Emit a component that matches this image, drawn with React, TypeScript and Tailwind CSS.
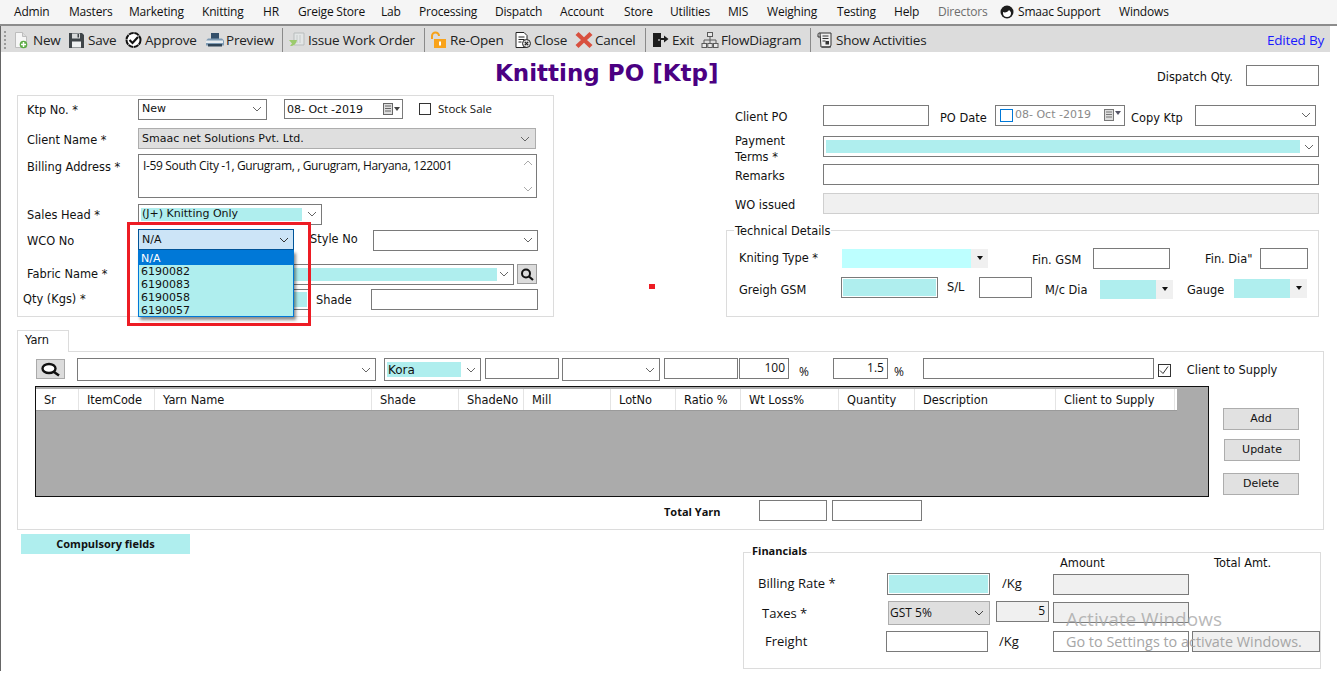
import React from "react";

const F = "font-['DejaVu_Sans',sans-serif]";
const O = "font-['Open_Sans',sans-serif]";

const Chev = ({ c = "#666" }: { c?: string }) => (
  <svg width="10" height="6" viewBox="0 0 10 6" className="shrink-0">
    <path d="M1 1l4 4 4-4" fill="none" stroke={c} strokeWidth="1" />
  </svg>
);

const Tri = () => (
  <svg width="6" height="4" viewBox="0 0 6 4"><path d="M0 0h6L3 4z" fill="#111" /></svg>
);

function Label({ w, children, ml = "", cls = "" }: { w?: string; children: React.ReactNode; ml?: string; cls?: string }) {
  return (
    <div className={`shrink-0 pt-[2px] text-[11.4px] leading-[14px] text-[#111] whitespace-nowrap ${F} ${w ?? ""} ${ml} ${cls}`}>{children}</div>
  );
}

function Sel({ cls, text, fill, fillW = "", sel = false, textCls = "pt-[1px]" }: { cls: string; text?: string; fill?: boolean; fillW?: string; sel?: boolean; textCls?: string }) {
  return (
    <div className={`shrink-0 flex items-center border border-[#7a7a7a] bg-white pr-[4px] text-[11px] text-[#111] ${F} ${cls}`}>
      {fill ? (
        <div className={`h-[calc(100%-6px)] bg-[#afeeee] ml-[2px] flex items-center pl-[1px] ${fillW}`}>{text}</div>
      ) : (
        <div className={`flex-1 pl-[3px] ${textCls}`}>{text}</div>
      )}
      <div className="flex-1" />
      <Chev c={sel ? "#333" : "#666"} />
    </div>
  );
}

function Inp({ cls, children }: { cls: string; children?: React.ReactNode }) {
  return (
    <div className={`shrink-0 border border-[#7a7a7a] bg-white text-[12px] text-[#111] text-right pr-[3px] leading-[18px] ${O} ${cls}`}>{children}</div>
  );
}

function Arrowed({ cls, fill }: { cls: string; fill: string }) {
  return (
    <div className={`shrink-0 flex bg-[#f0f0f0] ${cls}`}>
      <div className={`${fill} h-full`} />
      <div className="flex-1 flex items-center justify-center"><Tri /></div>
    </div>
  );
}

const I = ({ children }: { children: React.ReactNode }) => (
  <svg width="18" height="18" viewBox="0 0 18 18" className="shrink-0">{children}</svg>
);

const Icons: Record<string, React.ReactNode> = {
  New: (
    <I>
      <path d="M2.5 1.5h7l4 4v11h-11z" fill="#f6f6f6" stroke="#bdbdbd" />
      <path d="M9.5 1.5v4h4" fill="#ddd" stroke="#bdbdbd" />
      <circle cx="10.5" cy="13.5" r="3.8" fill="#5cab45" />
      <path d="M10.5 11v5M8 13.5h5" stroke="#fff" strokeWidth="1.5" />
    </I>
  ),
  Save: (
    <I>
      <path d="M1 2h13l2 2v13H1z" fill="#3f4549" />
      <rect x="4" y="2.5" width="8" height="5" fill="#d8dadb" />
      <rect x="9.5" y="3" width="1.5" height="3.5" fill="#3f4549" />
      <rect x="4" y="10.5" width="9" height="6" fill="#eef0f1" />
    </I>
  ),
  Approve: (
    <I>
      <circle cx="8.5" cy="9" r="7" fill="#fff" stroke="#111" strokeWidth="2" strokeDasharray="5 .6" />
      <path d="M4.5 9l3 3 5.5-6" fill="none" stroke="#111" strokeWidth="2.2" />
    </I>
  ),
  Preview: (
    <I>
      <rect x="5" y="2" width="8" height="6" fill="#34506a" />
      <path d="M0 9.5l2-2h14l2 2v5H0z" fill="#7d9ab3" />
      <rect x="0" y="9.5" width="17" height="2.5" fill="#e8edf1" />
      <rect x="2" y="13" width="14" height="2.5" fill="#2f4558" />
    </I>
  ),
  Issue: (
    <I>
      <path d="M6 2h10v12H6z" fill="#e3e6e6" stroke="#b9bdbd" />
      <path d="M9 4v8M12 4v8" stroke="#c6caca" />
      <path d="M1 9h8c-1 4-3 6-7 6l2-2.5z" fill="#9ccb6d" />
    </I>
  ),
  Open: (
    <I>
      <path d="M2 8V5a3.5 3.5 0 0 1 7 0" fill="none" stroke="#f6a21a" strokeWidth="2" />
      <rect x="4" y="8" width="12" height="9" fill="#f9a31b" />
      <rect x="9" y="10.5" width="2" height="4" fill="#fff" />
    </I>
  ),
  Close: (
    <I>
      <path d="M2 1.5h8l3 3v12H2z" fill="#fff" stroke="#222" />
      <path d="M4.5 6h6M4.5 8.5h6M4.5 11h3" stroke="#222" />
      <circle cx="12.5" cy="12.5" r="4" fill="#ddd" stroke="#222" />
      <path d="M10.8 10.8l3.4 3.4M14.2 10.8l-3.4 3.4" stroke="#222" strokeWidth="1.2" />
    </I>
  ),
  Cancel: (
    <I>
      <path d="M3.5 1L9 6.2 14.5 1 17.5 4 12 9l5.5 5-3 3L9 11.8 3.5 17 .5 14 6 9 .5 4z" fill="#d8503f" />
    </I>
  ),
  Exit: (
    <I>
      <path d="M1 2h8v14H1z" fill="#1d1d1d" />
      <path d="M9 7h3V4.5L16.5 8 12 11.5V9H9z" fill="#1d1d1d" />
      <rect x="6.5" y="8" width="1" height="2" fill="#fff" />
    </I>
  ),
  Flow: (
    <I>
      <g fill="#e8e8e8" stroke="#5a5a5a">
        <rect x="6.5" y="1.5" width="5" height="4" />
        <rect x="1" y="12.5" width="4.5" height="4" />
        <rect x="6.8" y="12.5" width="4.5" height="4" />
        <rect x="12.5" y="12.5" width="4.5" height="4" />
      </g>
      <path d="M9 5.5v7M3 12.5V9h12v3.5" fill="none" stroke="#5a5a5a" />
    </I>
  ),
  Show: (
    <I>
      <path d="M4 2h11v12a2 2 0 0 1-2 2H5z" fill="#efefef" stroke="#333" />
      <path d="M4 2a1.5 1.5 0 0 0-2 1.5V6h2.5M15 16H6" fill="none" stroke="#333" />
      <path d="M6.5 5h6M6.5 7.5h6M6.5 10h3" stroke="#333" />
      <rect x="9.5" y="10" width="3.5" height="3.5" fill="#333" />
    </I>
  ),
};

function Tool({ icon, label, cls = "" }: { icon: string; label: string; cls?: string }) {
  return (
    <div className={`flex items-center shrink-0 ${cls}`}>
      {Icons[icon]}
      <span className={`ml-[2px] text-[13.5px] tracking-[-0.2px] text-[#222] whitespace-nowrap ${O}`}>{label}</span>
    </div>
  );
}

const Sep = ({ ml = "" }: { ml?: string }) => <div className={`w-px h-[24px] bg-[#8a8a8a] shrink-0 ${ml}`} />;

const menus: [string, string][] = [
  ["Admin", "w-[55px]"],
  ["Masters", "w-[60px]"],
  ["Marketing", "w-[73px]"],
  ["Knitting", "w-[61px]"],
  ["HR", "w-[35px]"],
  ["Greige Store", "w-[83px]"],
  ["Lab", "w-[38px]"],
  ["Processing", "w-[76px]"],
  ["Dispatch", "w-[65px]"],
  ["Account", "w-[64px]"],
  ["Store", "w-[46px]"],
  ["Utilities", "w-[58px]"],
  ["MIS", "w-[39px]"],
  ["Weighing", "w-[70px]"],
  ["Testing", "w-[57px]"],
  ["Help", "w-[44px]"],
];

const cols: [string, string][] = [
  ["Sr", "w-[43px]"],
  ["ItemCode", "w-[76px]"],
  ["Yarn Name", "w-[217px]"],
  ["Shade", "w-[87px]"],
  ["ShadeNo", "w-[65px]"],
  ["Mill", "w-[87px]"],
  ["LotNo", "w-[65px]"],
  ["Ratio %", "w-[65px]"],
  ["Wt Loss%", "w-[98px]"],
  ["Quantity", "w-[76px]"],
  ["Description", "w-[141px]"],
  ["Client to Supply", "w-[119px]"],
];

function Btn({ children, cls = "" }: { children: React.ReactNode; cls?: string }) {
  return (
    <div className={`w-[76px] h-[22px] bg-[#e1e1e1] border border-[#adadad] flex items-center justify-center text-[11px] text-[#111] ${F} ${cls}`}>{children}</div>
  );
}

export default function App() {
  return (
    <div className={`relative w-[1337px] h-[694px] bg-white overflow-hidden ${O}`}>
      {/* menu */}
      <div className="h-[24px] bg-[#f5f5f5] flex items-center pl-[14px] text-[12px] tracking-[-0.2px] text-[#111] whitespace-nowrap">
        {menus.map(([m, c]) => (
          <span key={m} className={`${c} shrink-0`}>{m}</span>
        ))}
        <span className="w-[62px] shrink-0 text-[#6d6d6d]">Directors</span>
        <svg width="14" height="14" viewBox="0 0 14 14" className="shrink-0">
          <circle cx="7" cy="7" r="6.5" fill="#1c1c1c" />
          <path d="M3 7c2 1 5 0 6-2 1 1 2 2 2 3a4 4 0 0 1-8 0z" fill="#fff" />
        </svg>
        <span className="ml-[4px] w-[101px] shrink-0">Smaac Support</span>
        <span>Windows</span>
      </div>
      <div className="h-[2px] bg-[#8c8c8c]" />
      {/* toolbar */}
      <div className="h-[26px] w-[1330px] bg-[#dcdcdc] flex items-center pt-[2px] pr-[6px]">
        <div className="w-[3px] h-[18px] ml-[4px] mr-[6px] shrink-0 border-l-2 border-dotted border-[#9a9a9a]" />
        <Tool icon="New" label="New" cls="w-[55px]" />
        <Tool icon="Save" label="Save" cls="w-[57px]" />
        <Tool icon="Approve" label="Approve" cls="w-[81px]" />
        <Tool icon="Preview" label="Preview" cls="w-[76px]" />
        <Sep />
        <Tool icon="Issue" label="Issue Work Order" cls="ml-[5px] w-[136px]" />
        <Sep />
        <Tool icon="Open" label="Re-Open" cls="ml-[5px] w-[84px]" />
        <Tool icon="Close" label="Close" cls="w-[61px]" />
        <Tool icon="Cancel" label="Cancel" cls="w-[70px]" />
        <Sep />
        <Tool icon="Exit" label="Exit" cls="ml-[6px] w-[49px]" />
        <Tool icon="Flow" label="FlowDiagram" cls="w-[109px]" />
        <Sep />
        <Tool icon="Show" label="Show Activities" cls="ml-[5px]" />
        <div className="flex-1" />
        <span className="text-[13.5px] tracking-[-0.2px] text-[#1a1aff]">Edited By</span>
      </div>

      {/* body */}
      <div className="h-[642px] relative">
        {/* title row */}
        <div className="h-[43px] flex items-start">
          <div className={`ml-[495px] mt-[6px] w-[224px] text-[23px] leading-[30px] font-bold text-[#4b0082] whitespace-nowrap ${F}`}>Knitting PO [Ktp]</div>
          <Label ml="ml-[438px]" w="w-[89px]" cls="mt-[16px]">Dispatch Qty.</Label>
          <Inp cls="mt-[13px] w-[73px] h-[21px]" />
        </div>

        {/* top area */}
        <div className="flex items-start">
          {/* left group */}
          <div className="relative ml-[17px] w-[537px] h-[222px] border border-[#dcdcdc] shrink-0">
            <div className="flex items-center mt-[3px] h-[20px]">
              <Label w="w-[111px]" ml="ml-[9px]">Ktp No. *</Label>
              <Sel cls="w-[129px] h-[21px]" text="New" />
              <div className={`ml-[17px] w-[119px] h-[20px] border border-[#7a7a7a] flex items-center text-[11px] text-[#111] pl-[2px] ${F}`}>
                <span className="pt-[2px]">08- Oct -2019</span>
                <svg width="17" height="12" viewBox="0 0 17 12" className="ml-auto mr-[2px]">
                  <rect x=".5" y=".5" width="9" height="11" fill="#ddd" stroke="#666" />
                  <path d="M2 3h6M2 5.5h6M2 8h6" stroke="#666" />
                  <path d="M11 4h6l-3 4z" fill="#444" />
                </svg>
              </div>
              <div className="ml-[16px] w-[12px] h-[12px] border border-[#333] bg-white" />
              <div className={`ml-[7px] text-[11.5px] leading-[14px] text-[#111] whitespace-nowrap ${O}`}>Stock Sale</div>
            </div>
            <div className="flex items-center mt-[9px] h-[21px]">
              <Label w="w-[111px]" ml="ml-[9px]">Client Name *</Label>
              <div className={`w-[398px] h-[21px] bg-[#dfdfdf] border border-[#adadad] flex items-center pl-[3px] pr-[5px] text-[11px] text-[#111] ${F}`}>
                <span className="pt-[2px]">Smaac net Solutions Pvt. Ltd.</span>
                <div className="flex-1" />
                <Chev />
              </div>
            </div>
            <div className="flex items-start mt-[5px] h-[43px]">
              <Label w="w-[111px]" ml="ml-[9px]" cls="mt-[4px]">Billing Address *</Label>
              <div className="w-[399px] h-[44px] border border-[#7a7a7a] flex text-[12px] tracking-[-0.35px] text-[#111] pl-[4px] pt-[3px] leading-[16px]">
                <span className="flex-1">I-59 South City -1, Gurugram, , Gurugram, Haryana, 122001</span>
                <div className="w-[16px] flex flex-col items-center justify-between py-[5px] -mt-[3px]">
                  <span className="rotate-180 flex"><Chev c="#aaa" /></span>
                  <Chev c="#aaa" />
                </div>
              </div>
            </div>
            <div className="flex items-center mt-[7px] h-[20px]">
              <Label w="w-[111px]" ml="ml-[9px]">Sales Head *</Label>
              <Sel cls="w-[184px] h-[21px]" text="(J+) Knitting Only" fill fillW="w-[161px]" />
            </div>
            <div className="flex items-center mt-[6px] h-[20px]">
              <Label w="w-[111px]" ml="ml-[9px]">WCO No</Label>
              <div className="w-[156px] shrink-0" />
              <Label ml="ml-[16px]" w="w-[63px]" cls="-mt-[4px]">Style No</Label>
              <Sel cls="w-[165px] h-[21px]" />
            </div>
            <div className="flex items-center mt-[14px] h-[20px]">
              <Label w="w-[111px]" ml="ml-[9px]" cls="-mt-[2px]">Fabric Name *</Label>
              <Sel cls="w-[376px] h-[21px]" fill fillW="w-[356px]" />
              <div className="ml-[3px] w-[20px] h-[20px] bg-[#dcdcdc] border border-[#9a9a9a] flex items-center justify-center">
                <svg width="14" height="13" viewBox="0 0 14 13">
                  <circle cx="6" cy="5.5" r="4" fill="none" stroke="#111" strokeWidth="2" />
                  <path d="M9 8.5l4 3.5" stroke="#111" strokeWidth="2.2" />
                </svg>
              </div>
            </div>
            <div className="flex items-center mt-[5px] h-[20px]">
              <Label w="w-[115px]" ml="ml-[5px]" cls="-mt-[2px]">Qty (Kgs) *</Label>
              <div className="w-[172px] h-[21px] border border-[#7a7a7a] p-[2px]"><div className="h-full bg-[#afeeee]" /></div>
              <Label w="w-[55px]" ml="ml-[6px]">Shade</Label>
              <Inp cls="w-[167px] h-[21px]" />
            </div>
          </div>

          {/* marker */}
          <div className="ml-[95px] mt-[189px] w-[6px] h-[5px] bg-[#ed1c24] shrink-0" />

          {/* right col */}
          <div className="ml-[71px] w-[593px] shrink-0">
            <div className="flex items-center mt-[10px] h-[20px]">
              <Label w="w-[88px]" ml="ml-[9px]" cls="mt-[2px]">Client PO</Label>
              <Inp cls="w-[106px] h-[21px]" />
              <Label ml="ml-[11px]" w="w-[55px]" cls="mt-[4px]">PO Date</Label>
              <div className={`w-[130px] h-[21px] border border-[#7a7a7a] flex items-center text-[11px] text-[#8a8a8a] pl-[4px] ${F} shrink-0`}>
                <div className="w-[13px] h-[13px] border border-[#0078d7] mr-[2px] shrink-0" />
                <span className="pt-[1px]">08- Oct -2019</span>
                <svg width="17" height="12" viewBox="0 0 17 12" className="ml-auto mr-[3px]">
                  <rect x=".5" y=".5" width="9" height="11" fill="#ddd" stroke="#777" />
                  <path d="M2 3h6M2 5.5h6M2 8h6" stroke="#777" />
                  <path d="M11 2h6l-3 4z" fill="#556" />
                </svg>
              </div>
              <Label ml="ml-[6px]" w="w-[64px]" cls="mt-[4px]">Copy Ktp</Label>
              <Sel cls="w-[121px] h-[21px]" />
            </div>
            <div className="flex items-center mt-[11px] h-[21px]">
              <Label w="w-[88px]" ml="ml-[9px]" cls="leading-[16px] mt-[2px]">Payment<br />Terms *</Label>
              <Sel cls="w-[496px] h-[21px]" fill fillW="w-[474px]" />
            </div>
            <div className="flex items-center mt-[7px] h-[21px]">
              <Label w="w-[88px]" ml="ml-[9px]">Remarks</Label>
              <Inp cls="w-[496px] h-[21px]" />
            </div>
            <div className="flex items-center mt-[8px] h-[21px]">
              <Label w="w-[88px]" ml="ml-[9px]">WO issued</Label>
              <div className="w-[496px] h-[21px] bg-[#f0f0f0] border border-[#cfcfcf]" />
            </div>
            {/* Technical */}
            <div className="relative mt-[16px] w-[593px] h-[87px] border border-[#dcdcdc]">
              <div className={`absolute -top-[7px] left-[7px] bg-white px-[1px] text-[11.4px] leading-[14px] text-[#111] ${F}`}>Technical Details</div>
              <div className="flex items-center mt-[17px] h-[20px]">
                <Label w="w-[103px]" ml="ml-[12px]" cls="-mt-[2px]">Kniting Type *</Label>
                <Arrowed cls="w-[146px] h-[19px]" fill="w-[129px] bg-[#bdffff]" />
                <Label ml="ml-[44px]" w="w-[61px]" cls="mt-[1px]">Fin. GSM</Label>
                <Inp cls="w-[77px] h-[21px]" />
                <Label ml="ml-[35px]" w="w-[55px]" cls="-mt-[1px]">Fin. Dia"</Label>
                <Inp cls="w-[48px] h-[21px]" />
              </div>
              <div className="flex items-center mt-[9px] h-[21px]">
                <Label w="w-[102px]" ml="ml-[12px]" cls="mt-[2px]">Greigh GSM</Label>
                <div className="w-[97px] h-[21px] border border-[#7a7a7a] p-[1px] shrink-0"><div className="h-full bg-[#afeeee]" /></div>
                <Label ml="ml-[9px]" w="w-[32px]" cls="-mt-[4px]">S/L</Label>
                <Inp cls="w-[53px] h-[21px]" />
                <Label ml="ml-[13px]" w="w-[55px]" cls="mt-[3px]">M/c Dia</Label>
                <Arrowed cls="w-[73px] h-[19px] mt-[3px]" fill="w-[56px] bg-[#afeeee]" />
                <Label ml="ml-[14px]" w="w-[47px]" cls="mt-[3px]">Gauge</Label>
                <Arrowed cls="w-[73px] h-[19px] mt-[1px]" fill="w-[56px] bg-[#afeeee]" />
              </div>
            </div>
          </div>
        </div>

        {/* Yarn tab */}
        <div className={`ml-[17px] mt-[13px] w-[52px] h-[22px] border border-b-0 border-[#dcdcdc] bg-white text-[11.4px] pl-[7px] pt-[2px] leading-[14px] text-[#111] ${F} relative z-10 -mb-px`}>Yarn</div>
        <div className="ml-[17px] w-[1307px] h-[179px] border border-[#dcdcdc]">
          <div className="flex items-start mt-[6px]">
            <div className="ml-[18px] mt-[1px] w-[29px] h-[20px] bg-[#dcdcdc] border border-[#aaa] flex items-center justify-center shrink-0">
              <svg width="24" height="15" viewBox="0 0 24 15">
                <ellipse cx="10" cy="6.5" rx="6.5" ry="4.5" fill="#fff" stroke="#111" strokeWidth="2.4" />
                <path d="M15 10l5 3.5" stroke="#111" strokeWidth="2.6" />
              </svg>
            </div>
            <Sel cls="ml-[12px] w-[299px] h-[23px]" />
            <Sel cls="ml-[8px] w-[97px] h-[23px]" text="Kora" fill fillW="w-[74px] text-[12px]" />
            <Inp cls="ml-[4px] w-[74px] h-[21px]" />
            <Sel cls="ml-[3px] w-[98px] h-[23px]" />
            <Inp cls="ml-[4px] w-[74px] h-[21px]" />
            <Inp cls="ml-px w-[50px] h-[21px]">100</Inp>
            <span className={`ml-[10px] mt-[6px] text-[12px] leading-[16px] text-[#111] ${O}`}>%</span>
            <Inp cls="ml-[24px] w-[55px] h-[21px]">1.5</Inp>
            <span className={`ml-[6px] mt-[6px] text-[12px] leading-[16px] text-[#111] ${O}`}>%</span>
            <Inp cls="ml-[19px] w-[231px] h-[21px]" />
            <div className="ml-[4px] mt-[6px] w-[13px] h-[13px] border border-[#333] flex items-center justify-center shrink-0">
              <svg width="10" height="9" viewBox="0 0 10 9"><path d="M1 4.5l3 3 5-7" fill="none" stroke="#333" /></svg>
            </div>
            <Label ml="ml-[16px]" cls="mt-[3px]">Client to Supply</Label>
          </div>

          <div className="flex items-start mt-[5px]">
            <div className="ml-[17px] w-[1174px] h-[111px] bg-[#ababab] border-[1.5px] border-[#111] shrink-0 pt-[2px]">
              <div className={`flex h-[22px] w-[1141px] text-[11.4px] text-[#111] bg-white border-b border-[#9a9a9a] ${F}`}>
                {cols.map(([c, w]) => (
                  <div key={c} className={`${w} shrink-0 flex items-center pl-[8px] pt-[2px] border-r border-[#e4e4e4] whitespace-nowrap`}>{c}</div>
                ))}
              </div>
            </div>
            <div className="ml-[14px] flex flex-col mt-[22px]">
              <Btn>Add</Btn>
              <Btn cls="mt-[9px] ml-px">Update</Btn>
              <Btn cls="mt-[12px]">Delete</Btn>
            </div>
          </div>

          <div className="flex items-center mt-[3px]">
            <div className={`ml-[646px] w-[95px] mt-[3px] text-[11px] font-bold text-[#111] whitespace-nowrap ${O}`}>Total Yarn</div>
            <Inp cls="w-[68px] h-[21px]" />
            <Inp cls="ml-[5px] w-[90px] h-[21px]" />
          </div>
        </div>

        {/* Bottom */}
        <div className="flex items-start">
          <div className={`ml-[21px] mt-[4px] w-[169px] h-[20px] bg-[#afeeee] flex items-center justify-center text-[11px] font-bold text-[#111] shrink-0 ${O}`}>Compulsory fields</div>
          <div className="relative ml-[553px] mt-[22px] w-[578px] h-[117px] border border-[#dcdcdc] shrink-0">
            <div className={`absolute -top-[9px] left-[7px] bg-white px-[1px] text-[11px] leading-[14px] font-bold text-[#111] ${O}`}>Financials</div>
            <div className="flex h-[14px] mt-[1px]">
              <Label ml="ml-[316px]" w="w-[154px]">Amount</Label>
              <Label>Total Amt.</Label>
            </div>
            <div className="flex items-center mt-[5px] h-[22px]">
              <div className="ml-[14px] w-[129px] text-[13px] text-[#111]">Billing Rate *</div>
              <div className="w-[103px] h-[22px] border border-[#7a7a7a] p-[1px] shrink-0"><div className="h-full bg-[#afeeee]" /></div>
              <div className="ml-[12px] w-[51px] text-[13px] text-[#111]">/Kg</div>
              <div className="w-[136px] h-[21px] border border-[#7a7a7a] bg-[#f0f0f0]" />
            </div>
            <div className="flex items-start mt-[6px] h-[24px]">
              <div className="ml-[18px] mt-[3px] w-[126px] text-[13px] text-[#111]">Taxes *</div>
              <div className="w-[102px] h-[24px] bg-[#dfdfdf] border border-[#adadad] flex items-center pl-[1px] pr-[5px] text-[12px] text-[#111] shrink-0">
                GST 5%
                <div className="flex-1" />
                <Chev c="#444" />
              </div>
              <Inp cls="ml-[6px] w-[53px] h-[21px] bg-[#f0f0f0]!">5</Inp>
              <div className="ml-[4px] w-[136px] h-[21px] border border-[#7a7a7a] bg-[#f0f0f0] mt-px" />
            </div>
            <div className="flex items-center mt-[6px] h-[21px]">
              <div className="ml-[21px] w-[121px] text-[13px] text-[#111]">Freight</div>
              <Inp cls="w-[102px] h-[21px]" />
              <div className="ml-[11px] w-[54px] text-[13px] text-[#111]">/Kg</div>
              <div className="w-[136px] h-[21px] border border-[#7a7a7a] bg-white" />
              <div className="ml-[3px] w-[128px] h-[21px] border border-[#7a7a7a] bg-[#f0f0f0]" />
            </div>
          </div>
        </div>
      </div>

      {/* window edge */}
      <div className="absolute left-0 top-[26px] w-px h-[645px] bg-[#666]" />

      {/* Dropdown overlay */}
      <div className="absolute left-[127px] top-[222px] w-[184px] h-[104px] border-[3px] border-[#ed1c24] pointer-events-none" />
      <div className={`absolute left-[138px] top-[229px] w-[156px] h-[21px] bg-[#cce4f7] border border-[#005499] flex items-center pl-[3px] pr-[4px] text-[11px] text-[#111] ${F}`}>
        <span className="pt-[2px]">N/A</span>
        <div className="flex-1" />
        <Chev c="#333" />
      </div>
      <div className={`absolute left-[138px] top-[250px] w-[156px] h-[67px] bg-[#afeeee] border border-[#0078d7] shadow-[2px_3px_3px_rgba(0,0,0,0.45)] text-[11px] leading-[13px] text-[#111] ${F}`}>
        <div className="bg-[#0078d7] text-white pl-[2px] h-[14px] pt-[1px]">N/A</div>
        <div className="pl-[2px]">6190082</div>
        <div className="pl-[2px]">6190083</div>
        <div className="pl-[2px]">6190058</div>
        <div className="pl-[2px]">6190057</div>
      </div>

      {/* Watermark */}
      <div className="absolute left-[1066px] top-[606px] text-[19px] leading-[26px] text-[#a6a6a6]/80 whitespace-nowrap">Activate Windows</div>
      <div className="absolute left-[1066px] top-[632px] text-[14.4px] leading-[20px] text-[#a6a6a6] whitespace-nowrap">Go to Settings to activate Windows.</div>
    </div>
  );
}
